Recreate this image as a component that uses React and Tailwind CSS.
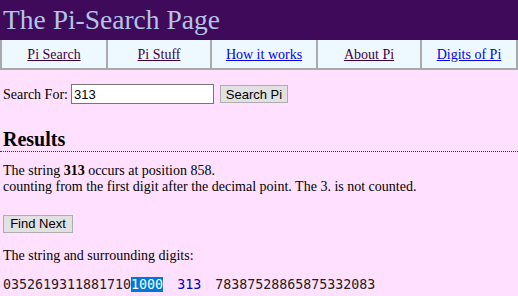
import React from "react";

const navLinks = [
  { label: "Pi Search", visited: true },
  { label: "Pi Stuff", visited: true },
  { label: "How it works", visited: false },
  { label: "About Pi", visited: true },
  { label: "Digits of Pi", visited: false },
];

export default function App() {
  return (
    <div className="w-[518px] h-[296px] overflow-hidden bg-[#ffe0ff] text-black font-['Liberation_Serif',serif]">
      {/* header */}
      <div className="h-[40px] bg-[#3f0a5a] pl-[3px] text-[27.5px] leading-[40px] text-[#b4c4e6]">
        The Pi-Search Page
      </div>

      {/* nav */}
      <div className="grid grid-cols-[104px_104px_106px_104px_1fr] h-[30px] bg-[#eef8ff] border-x-2 border-b-2 border-[#a9a9a9]">
        {navLinks.map((link, i) => (
          <div
            key={link.label}
            className={`flex items-center justify-center text-[14px] ${i > 0 ? "border-l-2 border-[#a9a9a9]" : ""}`}
          >
            <a
              href="#"
              className={`underline ${link.visited ? "text-[#400040]" : "text-[#0000ee]"}`}
            >
              {link.label}
            </a>
          </div>
        ))}
      </div>

      {/* search form */}
      <div className="mt-[14px] px-[3px] flex items-center h-[20px] text-[14px]">
        <span>Search For:</span>
        <input
          defaultValue="313"
          className="ml-[3px] w-[143px] h-[20px] bg-white border border-[#767676] px-[2px] text-[13px] font-['Liberation_Sans',sans-serif] outline-none"
        />
        <button className="ml-[6px] w-[68px] h-[18px] bg-[#e1e1e1] border border-[#adadad] text-[13px] leading-none font-['Liberation_Sans',sans-serif]">
          Search Pi
        </button>
      </div>

      {/* results */}
      <h2 className="mt-[23px] pl-[3px] text-[20px] leading-[24px] font-bold border-b border-dotted border-[#c00000]">
        Results
      </h2>

      <p className="mt-[11px] px-[3px] text-[14px] leading-[16px]">
        The string <b>313</b> occurs at position 858.
        <br />
        counting from the first digit after the decimal point. The 3. is not counted.
      </p>

      <div className="mt-[16px] px-[3px]">
        <button className="w-[70px] h-[18px] bg-[#e1e1e1] border border-[#adadad] text-[13px] leading-none font-['Liberation_Sans',sans-serif]">
          Find Next
        </button>
      </div>

      <p className="mt-[13px] px-[3px] text-[14px] leading-[16px]">
        The string and surrounding digits:
      </p>

      <div className="mt-[13px] px-[3px] whitespace-pre text-[13.3px] leading-[16px] text-[#222] font-['DejaVu_Sans_Mono',monospace]">
        0352619311881710<span className="bg-[#0078d7] text-white">1000</span>
        <span className="mx-[14px] text-[#0000cc]">313</span>
        78387528865875332083
      </div>
    </div>
  );
}
